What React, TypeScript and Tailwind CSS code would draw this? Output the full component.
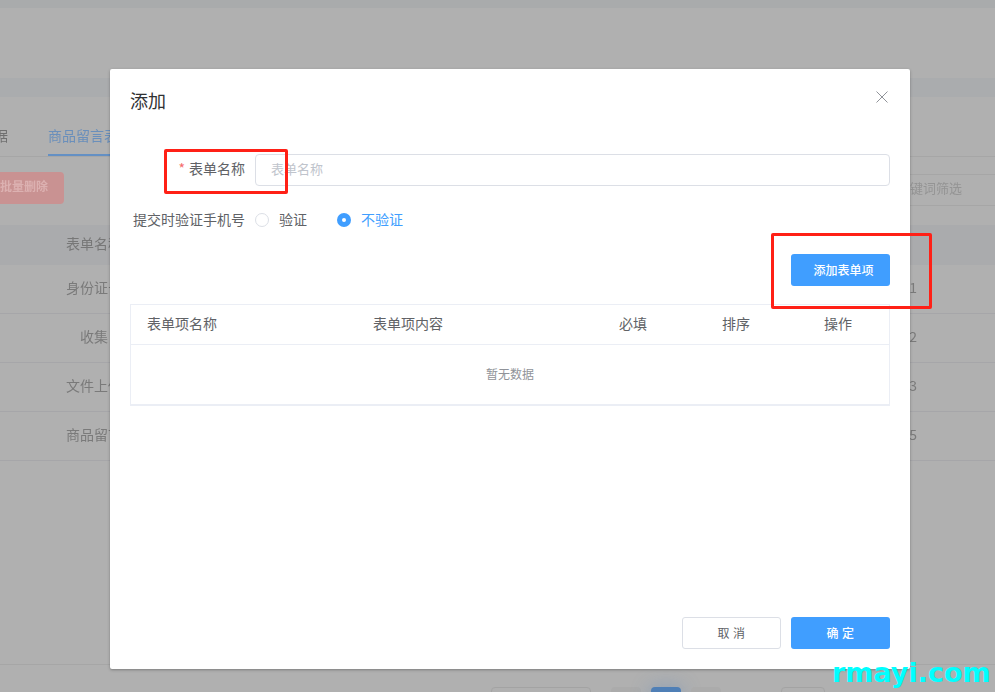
const ROWS = [
  { name: "身份证号", sort: 1 },
  { name: "收集", sort: 2 },
  { name: "文件上传", sort: 3 },
  { name: "商品留言", sort: 5 },
];

const COLUMNS = ["表单项名称", "表单项内容", "必填", "排序", "操作"];

function BackgroundPage() {
  return (
    <div className="blur-[0.5px]">
      <div className="h-2 bg-[#a9abac]" />
      <div className="h-[70px]" />
      <div className="h-[19px] bg-[#aaacae]" />
      <div className="flex h-[60px] items-end border-b border-[#a6a6a6]">
        <div className="flex h-[39px] w-full text-sm">
          <span className="pt-[8px] text-[#707070]">
            <span className="ml-[-6px]">据</span>
          </span>
          <span className="ml-[40px] h-full w-[84px] border-b-2 border-[#6490c4] pt-[8px] whitespace-nowrap text-[#6a8fbb]">
            商品留言表单
          </span>
        </div>
      </div>
      <div className="flex h-[68px] items-center">
        <div className="mb-[6px] flex h-8 w-16 items-center justify-end rounded-r bg-[#c99292] pr-4 pb-1 text-xs font-bold text-[#dcb1b1]">
          批量删除
        </div>
        <div className="mb-[2px] ml-auto flex h-8 w-[98px] items-center border-y border-[#a6a6a6] pb-1 text-[13px] whitespace-nowrap text-[#949494]">
          关键词筛选
        </div>
      </div>
      <div className="flex h-[40px] items-center bg-[#aaabad] pb-[5px] text-sm text-[#777777]">
        <span className="ml-[66px] w-[100px]">表单名称</span>
      </div>
      {ROWS.map((row) => (
        <div key={row.sort} className="flex h-[49px] items-center border-b border-[#a6a6a9] pb-1 text-sm text-[#7a7a7a]">
          <span className="ml-[34px] w-[120px] text-center">{row.name}</span>
          <span className="mr-[78px] ml-auto">{row.sort}</span>
        </div>
      ))}
      <div className="h-[204px] border-b border-[#a6a6a6]" />
      <div className="flex pt-[22px] pl-[491px]">
        <div className="h-8 w-[100px] rounded border border-[#a3a3a3]" />
        <div className="ml-5 h-8 w-[30px] rounded bg-[#ababab]" />
        <div className="ml-[10px] h-8 w-[30px] rounded bg-[#4f7fb6] shadow-[0_0_20px_rgba(80,130,190,0.4)]" />
        <div className="ml-[10px] h-8 w-[30px] rounded bg-[#ababab]" />
        <div className="ml-[60px] h-8 w-[44px] rounded border border-[#a3a3a3]" />
      </div>
    </div>
  );
}

function Radio({ label, checked }: { label: string; checked?: boolean }) {
  return (
    <div className="flex items-center">
      {checked ? (
        <span className="flex size-[14px] items-center justify-center rounded-full bg-[#409eff]">
          <span className="size-1 rounded-full bg-white" />
        </span>
      ) : (
        <span className="size-[14px] rounded-full border border-[#dcdfe6] bg-white" />
      )}
      <span className={checked ? "ml-[10px] pb-[2px] text-sm text-[#409eff]" : "ml-[10px] pb-[2px] text-sm text-[#606266]"}>{label}</span>
    </div>
  );
}

function AddDialog() {
  return (
    <div className="absolute top-[69px] left-[110px] flex h-[600px] w-[800px] flex-col rounded-[2px] bg-white px-5 shadow-[0_1px_3px_rgba(0,0,0,0.3)]">
      <div className="flex h-[85px] items-start justify-between pt-[19px]">
        <span className="text-lg leading-6 text-[#303133]">添加</span>
        <svg className="mt-[3px] mr-[2px]" width="12" height="12" viewBox="0 0 12 12" fill="none" stroke="#909399" strokeWidth="1">
          <path d="M0.5 0.5 11.5 11.5M11.5 0.5 0.5 11.5" />
        </svg>
      </div>

      <div className="flex h-8 items-center">
        <label className="w-[125px] pr-[10px] pb-1 text-right text-sm text-[#606266]">
          <span className="mr-1 text-[#f56c6c]">*</span>表单名称
        </label>
        <input
          placeholder="表单名称"
          className="h-8 flex-1 rounded border border-[#dcdfe6] px-[15px] pb-1 text-[13px] outline-none placeholder:text-[#c0c4cc]"
        />
      </div>

      <div className="mt-[18px] flex h-8 items-center">
        <label className="w-[125px] pr-[10px] pb-[2px] text-right text-sm whitespace-nowrap text-[#606266]">提交时验证手机号</label>
        <div className="flex gap-[30px]">
          <Radio label="验证" />
          <Radio label="不验证" checked />
        </div>
      </div>

      <div className="mt-[18px] flex justify-end">
        <button className="h-8 w-[99px] rounded-[3px] bg-[#409eff] pl-[6px] text-xs font-medium text-white">添加表单项</button>
      </div>

      <div className="mt-[18px] border border-b-2 border-[#ebeef5] text-sm">
        <div className="grid h-10 grid-cols-[226px_246px_103px_102px_1fr] items-center border-b border-[#ebeef5] text-[#606266]">
          {COLUMNS.map((col) => (
            <span key={col} className="pb-1 pl-4">{col}</span>
          ))}
        </div>
        <div className="flex h-[59px] items-center justify-center pb-[2px] text-xs text-[#909399]">暂无数据</div>
      </div>

      <div className="mt-auto mb-5 flex justify-end gap-[10px]">
        <button className="h-8 w-[99px] rounded-[3px] border border-[#dcdfe6] text-xs tracking-[0.5px] text-[#606266]">取 消</button>
        <button className="h-8 w-[99px] rounded-[3px] bg-[#409eff] text-xs font-medium tracking-[0.5px] text-white">确 定</button>
      </div>
    </div>
  );
}

export default function App() {
  return (
    <div className="relative h-[692px] w-full overflow-hidden bg-[#b0b0b0] font-['Noto_Sans_CJK_SC','Liberation_Sans',sans-serif]">
      <BackgroundPage />
      <AddDialog />
      {/* red annotation boxes sit on top of the screenshot */}
      <div className="absolute top-[149px] left-[164px] h-[45px] w-[124px] rounded-[2px] border-[3px] border-[#ff2016]" />
      <div className="absolute top-[233px] left-[771px] h-[76px] w-[161px] rounded-[2px] border-[3px] border-[#ff2016]" />
      <span className="absolute top-[655px] left-[832px] font-['DejaVu_Sans',sans-serif] text-[27px] leading-[36px] font-bold text-[#00ffff]">
        rmayi.com
      </span>
    </div>
  );
}
